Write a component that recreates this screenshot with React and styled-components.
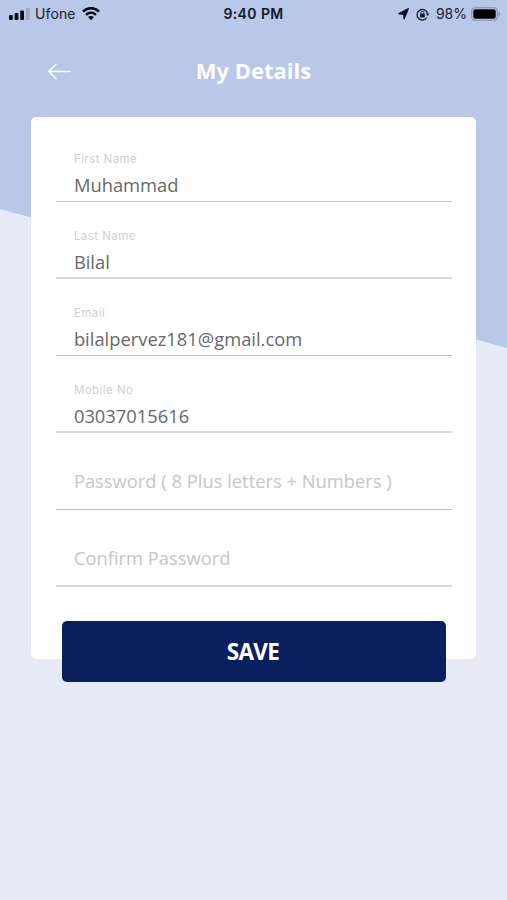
import React from 'react';
import styled, { createGlobalStyle } from 'styled-components';

const GlobalStyle = createGlobalStyle`
  *, *::before, *::after { box-sizing: border-box; }
  body { margin: 0; }
`;

const Screen = styled.main`
  width: 507px;
  height: 900px;
  overflow: hidden;
  background: #e5eaf6;
  position: relative;
  z-index: 0;
  font-family: 'Open Sans', sans-serif;

  &::before {
    content: '';
    position: absolute;
    z-index: -1;
    inset: 0;
    background: #b9c7e9;
    clip-path: polygon(0 0, 100% 0, 100% 348px, 0 209px);
  }
`;

const StatusBar = styled.div`
  display: grid;
  grid-template-columns: 1fr auto 1fr;
  align-items: center;
  height: 28px;
  padding: 0 6px 0 9px;
  font: 400 14px/28px Inter, sans-serif;
  color: #182033;
`;

const StatusGroup = styled.div`
  display: flex;
  align-items: center;
  justify-content: ${({ $end }) => ($end ? 'flex-end' : 'flex-start')};

  svg { display: block; flex: none; }
`;

const Carrier = styled.span`
  margin: 0 6px 0 5px;
  letter-spacing: 0.1px;
`;

const Clock = styled.time`
  margin-right: 3px;
  font-weight: 600;
  letter-spacing: 0.4px;
  color: #10182a;
`;

const RotationLock = styled.span`
  margin-left: 7px;
`;

const Charge = styled.span`
  margin: 0 4px 0 6px;
  letter-spacing: 0;
`;

const Header = styled.header`
  display: grid;
  grid-template-columns: 48px 1fr 48px;
  align-items: center;
  height: 89px;
  padding: 0 35px 5px;
`;

const BackButton = styled.button`
  display: flex;
  justify-content: center;
  padding: 2px 0 0;
  border: 0;
  background: none;
`;

const Title = styled.h1`
  margin: 0;
  text-align: center;
  font-size: 22px;
  line-height: 30px;
  font-weight: 700;
  color: #fff;
`;

const Card = styled.form`
  width: 445px;
  height: 542px;
  margin-left: 31.4px;
  padding: 8px 24.5px 0;
  border-radius: 5px;
  background: #fff;
`;

const Field = styled.label`
  display: flex;
  flex-direction: column;
  height: 77px;
  padding: 26px 18px 0;
  border-bottom: ${({ $soft }) => ($soft ? '2px solid #d8d8da' : '1px solid #c2c2c4')};
`;

const FieldLabel = styled.span`
  height: 17px;
  font: 400 11.5px/17px Inter, sans-serif;
  letter-spacing: 0.45px;
  color: #cfcfd1;
`;

const Input = styled.input`
  width: 100%;
  height: 28px;
  margin-top: ${({ $empty }) => ($empty ? '8px' : '3px')};
  padding: 0;
  border: 0;
  outline: 0;
  background: none;
  font: 400 18.35px/28px 'Open Sans', sans-serif;
  color: #68686a;

  &::placeholder { color: #c6c6c8; opacity: 1; }
`;

const SaveButton = styled.button`
  display: block;
  width: 384px;
  height: 61px;
  margin: 34px auto 0;
  padding: 1px 2px 0 0;
  border: 0;
  border-radius: 5px;
  background: #0a205e;
  color: #fff;
  font: 700 22.5px/60px 'Open Sans', sans-serif;
  letter-spacing: -0.7px;
`;

const SignalIcon = () => (
  <svg width="21" height="12" viewBox="0 0 21 12" fill="#080c14">
    <rect x="0" y="7" width="3.8" height="5" rx="1" />
    <rect x="5.6" y="5" width="3.8" height="7" rx="1" />
    <rect x="11.2" y="2.5" width="3.8" height="9.5" rx="1" />
    <rect x="16.9" y="0" width="3.8" height="12" rx="1" fill="#9da9c8" />
  </svg>
);

const WifiIcon = () => (
  <svg width="18" height="14" viewBox="0 0 18 14" fill="none" stroke="#05070c" strokeWidth="2.5">
    <path d="M1 4.5C5.5 0 12.5 0 17 4.5" />
    <path d="M4 7.8C7 5 11 5 14 7.8" />
    <path d="M6.1 10C7.7 8.6 10.3 8.6 11.9 10L9 13.2Z" fill="#05070c" stroke="none" />
  </svg>
);

const LocationIcon = () => (
  <svg width="11" height="12" viewBox="0 0 11 12" fill="#090d16" stroke="#090d16" strokeWidth=".7">
    <path d="M10.6.7 6.4 10.9Q5.9 11.6 5.7 10.7L5.4 6.4.8 6.1Q.2 5.8.8 5.4L10.1.4Q10.8.1 10.6.7Z" />
  </svg>
);

const RotationLockIcon = () => (
  <svg width="14" height="13" viewBox="0 0 14 13" fill="none" stroke="#151d30">
    <path d="M10.9 9.5A5.3 5.3 0 1 1 11.5 5.4" strokeWidth="1.3" />
    <path d="M9.9 5.4H13.4L11.7 8.2Z" fill="#151d30" stroke="none" />
    <rect x="4" y="5.8" width="4.8" height="3.7" rx=".5" fill="#151d30" stroke="none" />
    <path d="M5 6V4.7a1.4 1.4 0 0 1 2.8 0V6" strokeWidth="1" />
  </svg>
);

const BatteryIcon = () => (
  <svg width="30" height="14" viewBox="0 0 30 14">
    <rect x=".7" y=".7" width="25.6" height="12.6" rx="3.5" fill="none" stroke="#8590ae" strokeWidth="1.1" />
    <rect x="2.3" y="2.3" width="22.4" height="9.4" rx="2" fill="#020304" />
    <path d="M27.5 4.7Q29.4 5.5 29.4 7T27.5 9.3Z" fill="#8590ae" />
  </svg>
);

const ArrowIcon = () => (
  <svg width="23" height="17" viewBox="0 0 23 17" fill="none" stroke="#fff" strokeWidth="1.5" strokeLinecap="round" strokeLinejoin="round">
    <path d="M22 8.5H1M8 1.3.8 8.5 8 15.7" />
  </svg>
);

const fields = [
  { label: 'First Name', value: 'Muhammad' },
  { label: 'Last Name', value: 'Bilal', soft: true },
  { label: 'Email', value: 'bilalpervez181@gmail.com' },
  { label: 'Mobile No', value: '03037015616', soft: true },
  { placeholder: 'Password ( 8 Plus letters + Numbers )', type: 'password' },
  { placeholder: 'Confirm Password', type: 'password', soft: true },
];

export default function App() {
  return (
    <>
      <GlobalStyle />
      <Screen>
        <StatusBar>
          <StatusGroup>
            <SignalIcon />
            <Carrier>Ufone</Carrier>
            <WifiIcon />
          </StatusGroup>
          <Clock>9:40 PM</Clock>
          <StatusGroup $end>
            <LocationIcon />
            <RotationLock><RotationLockIcon /></RotationLock>
            <Charge>98%</Charge>
            <BatteryIcon />
          </StatusGroup>
        </StatusBar>
        <Header>
          <BackButton type="button" aria-label="Back"><ArrowIcon /></BackButton>
          <Title>My Details</Title>
        </Header>
        <Card>
          {fields.map(({ label, value, placeholder, type, soft }) => (
            <Field key={label || placeholder} $soft={soft}>
              {label && <FieldLabel>{label}</FieldLabel>}
              <Input
                type={type || 'text'}
                defaultValue={value}
                placeholder={placeholder}
                $empty={!label}
              />
            </Field>
          ))}
          <SaveButton type="button">SAVE</SaveButton>
        </Card>
      </Screen>
    </>
  );
}
